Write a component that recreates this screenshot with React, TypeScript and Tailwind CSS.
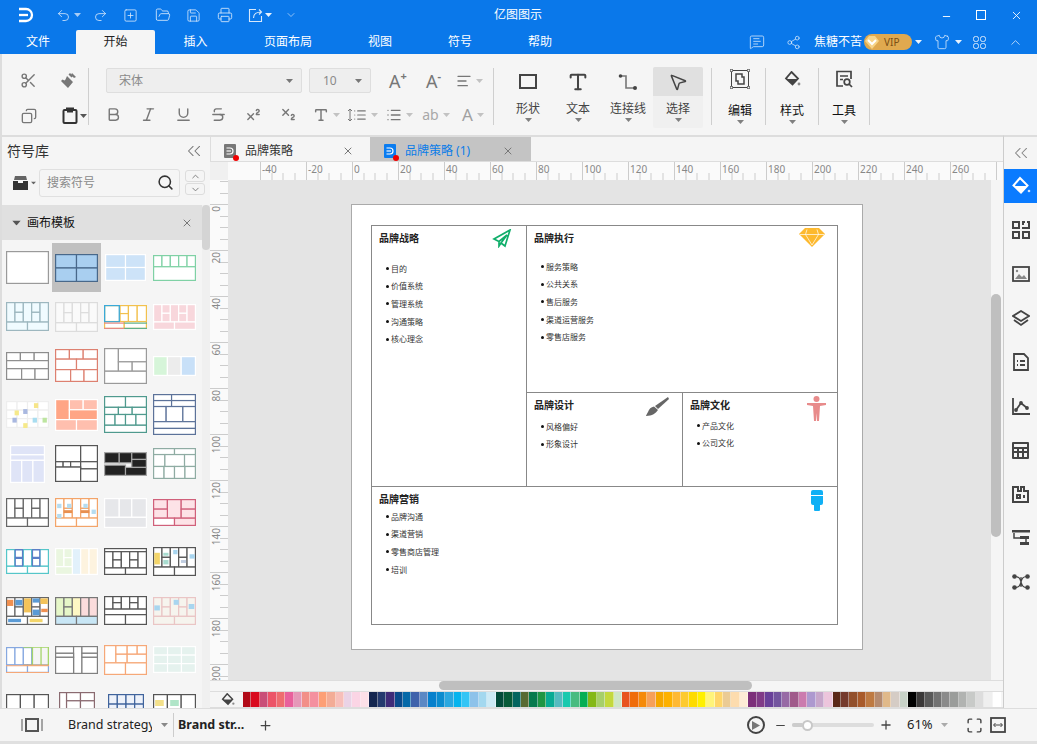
import React from "react";
import {
  Scissors, Undo2, Redo2, SquarePlus, FolderOpen, Save, Printer, Share2, Shirt, ChevronUp, ChevronsLeft,
  Search, X, Minus, Plus, Bold, Italic, Underline, Strikethrough, Superscript, Subscript, List, AlignLeft,
  ChevronDown, MessageSquareText, Maximize, Copy, Type, MousePointer2,
} from "lucide-react";

type Cell = [number, number, number, number, string?];
type Thumb = { h: number; w?: number; stroke: string; fill: string; cells: Cell[]; notes?: Cell[]; sw?: number };

const bmc: Cell[] = [[0, 0, 0.2, 0.7], [0.2, 0, 0.2, 0.35], [0.2, 0.35, 0.2, 0.35], [0.4, 0, 0.2, 0.7], [0.6, 0, 0.2, 0.35], [0.6, 0.35, 0.2, 0.35], [0.8, 0, 0.2, 0.7], [0, 0.7, 0.5, 0.3], [0.5, 0.7, 0.5, 0.3]];
const quad: Cell[] = [[0, 0, 0.5, 0.5], [0.5, 0, 0.5, 0.5], [0, 0.5, 0.5, 0.5], [0.5, 0.5, 0.5, 0.5]];
const brick: Cell[] = [[0, 0, 0.33, 0.3], [0.33, 0, 0.33, 0.3], [0.66, 0, 0.34, 0.3], [0, 0.3, 0.5, 0.33], [0.5, 0.3, 0.5, 0.33], [0, 0.63, 0.36, 0.37], [0.36, 0.63, 0.32, 0.37], [0.68, 0.63, 0.32, 0.37]];
const rows3: Cell[] = [[0, 0, 0.33, 0.3], [0.33, 0, 0.33, 0.3], [0.66, 0, 0.34, 0.3], [0, 0.3, 1, 0.3], [0, 0.6, 0.36, 0.4], [0.36, 0.6, 0.32, 0.4], [0.68, 0.6, 0.32, 0.4]];
const tiles: Cell[] = [[0, 0, 0.25, 0.33], [0.25, 0, 0.25, 0.33], [0.5, 0, 0.25, 0.33], [0.75, 0, 0.25, 0.33], [0, 0.33, 0.25, 0.33], [0.25, 0.33, 0.25, 0.33], [0.5, 0.33, 0.25, 0.33], [0.75, 0.33, 0.25, 0.33], [0, 0.66, 0.25, 0.34], [0.25, 0.66, 0.25, 0.34], [0.5, 0.66, 0.25, 0.34], [0.75, 0.66, 0.25, 0.34]];
const stack: Cell[] = [[0, 0, 0.33, 0.65], [0.33, 0, 0.67, 0.38], [0.33, 0.38, 0.33, 0.27], [0.66, 0.38, 0.34, 0.27], [0, 0.65, 1, 0.35]];

const thumbs: Thumb[] = [
  { h: 33, stroke: "#9a9a9a", fill: "#ffffff", cells: [[0, 0, 1, 1]] },
  { h: 28, stroke: "#48688a", fill: "#a9cff0", cells: quad },
  { h: 27, w: 41, stroke: "#ffffff", fill: "#cde3f8", cells: quad },
  { h: 26, stroke: "#7fd1a5", fill: "#ffffff", cells: [[0, 0, 0.2, 0.45], [0.2, 0, 0.2, 0.45], [0.4, 0, 0.2, 0.45], [0.6, 0, 0.2, 0.45], [0.8, 0, 0.2, 0.45], [0, 0.45, 1, 0.55]] },

  { h: 29, stroke: "#9db7bf", fill: "#f0fbff", cells: bmc },
  { h: 30, stroke: "#dcdcdc", fill: "#fafafa", cells: bmc },
  { h: 24, stroke: "#f2c14e", fill: "#ffffff", cells: [[0, 0, 0.37, 0.7, "#fff"], [0.37, 0, 0.2, 0.35], [0.37, 0.35, 0.2, 0.35], [0.57, 0, 0.21, 0.7], [0.78, 0, 0.22, 0.7], [0, 0.7, 0.47, 0.3], [0.47, 0.7, 0.53, 0.3]], notes: [[0, 0, 0.37, 0.05, "#3aa9d8"], [0, 0, 0.03, 0.7, "#3aa9d8"], [0.34, 0, 0.03, 0.7, "#3aa9d8"], [0, 0.67, 0.37, 0.05, "#3aa9d8"], [0, 0.73, 0.47, 0.05, "#e58a84"], [0, 0.95, 0.47, 0.05, "#e58a84"], [0.47, 0.73, 0.53, 0.05, "#5fb08a"], [0.47, 0.95, 0.53, 0.05, "#5fb08a"]] },
  { h: 26, stroke: "#ffffff", fill: "#f8d7dc", cells: bmc },

  { h: 28, stroke: "#8d8d8d", fill: "#ffffff", cells: rows3 },
  { h: 33, stroke: "#dd8070", fill: "#ffffff", cells: brick },
  { h: 36, stroke: "#9a9a9a", fill: "#ffffff", cells: stack },
  { h: 20, stroke: "#ffffff", fill: "#d6f5d9", cells: [[0, 0, 0.33, 1], [0.33, 0, 0.33, 1, "#ececec"], [0.66, 0, 0.34, 1, "#c8e0f8"]] },

  { h: 27, stroke: "#eeeeee", fill: "#ffffff", cells: tiles, notes: [[0.2, 0.35, 0.1, 0.18, "#f6e98a"], [0.4, 0.3, 0.1, 0.18, "#a9b8e0"], [0.65, 0.08, 0.1, 0.18, "#f6e58a"], [0.15, 0.62, 0.1, 0.18, "#a9b8e0"], [0.62, 0.62, 0.1, 0.18, "#a8ddf0"], [0.85, 0.62, 0.1, 0.18, "#bde5a0"], [0.4, 0.82, 0.1, 0.18, "#f6e98a"]] },
  { h: 32, stroke: "#ffffff", fill: "#ffbfae", cells: [[0, 0, 0.33, 0.65, "#ffa585"], [0.33, 0, 0.33, 0.33], [0.66, 0, 0.34, 0.33], [0.33, 0.33, 0.67, 0.32, "#ffa585"], [0, 0.65, 0.5, 0.35], [0.5, 0.65, 0.5, 0.35]] },
  { h: 37, stroke: "#4f9a8e", fill: "#ffffff", cells: [[0, 0, 0.5, 0.3], [0.5, 0, 0.5, 0.3], [0, 0.3, 0.33, 0.2], [0.33, 0.3, 0.33, 0.2], [0.66, 0.3, 0.34, 0.2], [0, 0.5, 0.25, 0.3], [0.25, 0.5, 0.25, 0.3], [0.5, 0.5, 0.25, 0.3], [0.75, 0.5, 0.25, 0.3], [0, 0.8, 1, 0.2]] },
  { h: 41, stroke: "#5c7299", fill: "#ffffff", cells: [[0, 0, 0.43, 0.15], [0.43, 0, 0.57, 0.15], [0, 0.15, 0.43, 0.15], [0.43, 0.15, 0.57, 0.15], [0, 0.3, 0.3, 0.38], [0.3, 0.3, 0.4, 0.38], [0.7, 0.3, 0.3, 0.38], [0, 0.68, 1, 0.17], [0, 0.85, 1, 0.15]] },

  { h: 38, w: 35, stroke: "#ffffff", fill: "#dfe4f7", cells: [[0, 0, 1, 0.25], [0, 0.25, 1, 0.15], [0, 0.4, 0.33, 0.6], [0.33, 0.4, 0.33, 0.6], [0.66, 0.4, 0.34, 0.6]] },
  { h: 37, stroke: "#555555", fill: "#ffffff", cells: [[0, 0, 0.6, 0.45], [0.6, 0, 0.4, 0.45], [0, 0.45, 0.18, 0.15], [0.18, 0.45, 0.18, 0.15], [0.36, 0.45, 0.24, 0.15], [0.6, 0.45, 0.4, 0.2], [0, 0.6, 0.6, 0.4], [0.6, 0.65, 0.4, 0.35]] },
  { h: 24, stroke: "#a5a5a5", fill: "#222222", cells: [[0, 0, 0.35, 0.45], [0.35, 0, 0.3, 0.45], [0.65, 0, 0.35, 0.3], [0.65, 0.3, 0.35, 0.35], [0, 0.55, 0.5, 0.45], [0.5, 0.65, 0.5, 0.35]] },
  { h: 31, stroke: "#8faca3", fill: "#ffffff", cells: [[0, 0, 0.5, 0.2], [0.5, 0, 0.5, 0.2], [0, 0.2, 0.27, 0.4], [0.27, 0.2, 0.47, 0.4], [0.74, 0.2, 0.26, 0.4], [0, 0.6, 0.25, 0.4], [0.25, 0.6, 0.25, 0.4], [0.5, 0.6, 0.25, 0.4], [0.75, 0.6, 0.25, 0.4]] },

  { h: 29, stroke: "#666666", fill: "#ffffff", cells: bmc },
  { h: 29, stroke: "#f3a469", fill: "#ffffff", cells: bmc, notes: [[0.05, 0.2, 0.1, 0.15, "#b5dcf0"], [0.28, 0.2, 0.1, 0.15, "#b5dcf0"], [0.05, 0.55, 0.1, 0.15, "#b5dcf0"], [0.66, 0.2, 0.1, 0.15, "#b5dcf0"], [0.85, 0.4, 0.1, 0.15, "#b5dcf0"], [0.2, 0.42, 0.2, 0.1, "#e89050"], [0.6, 0.42, 0.2, 0.1, "#e89050"]] },
  { h: 30, stroke: "#ffffff", fill: "#e6e7ea", cells: [[0, 0, 0.35, 0.65], [0.35, 0, 0.3, 0.65], [0.65, 0, 0.35, 0.65], [0, 0.65, 1, 0.35]] },
  { h: 27, stroke: "#d0607a", fill: "#fde3e7", cells: [[0, 0, 0.33, 0.37], [0.33, 0, 0.33, 0.72], [0.66, 0, 0.34, 0.37], [0, 0.37, 0.33, 0.35], [0.66, 0.37, 0.34, 0.35], [0, 0.72, 0.5, 0.28, "#fff"], [0.5, 0.72, 0.5, 0.28]] },

  { h: 25, stroke: "#55c6c9", fill: "#ffffff", cells: bmc, notes: [[0.2, 0, 0.2, 0.7, "#5b7fc7"], [0.6, 0, 0.2, 0.7, "#5b7fc7"], [0.23, 0.06, 0.14, 0.25, "#fff"], [0.23, 0.4, 0.14, 0.25, "#fff"], [0.63, 0.06, 0.14, 0.25, "#fff"], [0.63, 0.4, 0.14, 0.25, "#fff"]] },
  { h: 27, stroke: "#ffffff", fill: "#eaf6e0", cells: [[0, 0, 0.2, 0.7], [0.2, 0, 0.2, 0.35], [0.2, 0.35, 0.2, 0.35], [0.4, 0, 0.2, 1, "#e2f1fb"], [0.6, 0, 0.2, 1, "#fdf3df"], [0.8, 0, 0.2, 1, "#fdf3df"], [0, 0.7, 0.4, 0.3]] },
  { h: 27, stroke: "#555555", fill: "#ffffff", cells: [[0, 0, 1, 0.12], [0, 0.12, 0.2, 0.63], [0.2, 0.12, 0.2, 0.32], [0.2, 0.44, 0.2, 0.31], [0.4, 0.12, 0.2, 0.63], [0.6, 0.12, 0.2, 0.32], [0.6, 0.44, 0.2, 0.31], [0.8, 0.12, 0.2, 0.63], [0, 0.75, 0.5, 0.25], [0.5, 0.75, 0.5, 0.25]] },
  { h: 29, stroke: "#555555", fill: "#ffffff", cells: bmc, notes: [[0.03, 0.2, 0.13, 0.4, "#f3d56a"], [0.47, 0.1, 0.1, 0.15, "#a8d5ef"], [0.85, 0.25, 0.12, 0.15, "#a8d5ef"], [0.24, 0.2, 0.12, 0.1, "#a8dcd0"], [0.24, 0.45, 0.12, 0.15, "#a8dcd0"], [0.65, 0.45, 0.12, 0.1, "#c0cde0"]] },

  { h: 28, stroke: "#666666", fill: "#ffffff", cells: bmc, notes: [[0.02, 0.1, 0.15, 0.22, "#f09050"], [0.42, 0.05, 0.16, 0.5, "#f3c35a"], [0.22, 0.1, 0.16, 0.2, "#5b9bd5"], [0.62, 0.05, 0.16, 0.15, "#5b9bd5"], [0.62, 0.45, 0.16, 0.2, "#5b9bd5"], [0.8, 0.05, 0.17, 0.2, "#f3c35a"], [0.82, 0.42, 0.15, 0.12, "#f09050"], [0.05, 0.78, 0.3, 0.12, "#5b9bd5"], [0.55, 0.78, 0.3, 0.12, "#f3d56a"]] },
  { h: 28, stroke: "#777777", fill: "#e6f7c8", cells: [[0, 0, 0.2, 0.7], [0.2, 0, 0.2, 0.35], [0.2, 0.35, 0.2, 0.35], [0.4, 0, 0.2, 0.7, "#fdf7c4"], [0.6, 0, 0.2, 0.7, "#fbdcdc"], [0.8, 0, 0.2, 0.7, "#fbdcdc"], [0, 0.7, 0.5, 0.3, "#c8e6f5"], [0.5, 0.7, 0.5, 0.3, "#c8e6f5"]] },
  { h: 29, stroke: "#555555", fill: "#ffffff", cells: [[0, 0, 0.2, 0.45], [0.2, 0, 0.2, 0.22], [0.2, 0.22, 0.2, 0.23], [0.4, 0, 0.2, 0.45], [0.6, 0, 0.2, 0.22], [0.6, 0.22, 0.2, 0.23], [0.8, 0, 0.2, 0.45], [0, 0.45, 1, 0.2], [0, 0.65, 0.5, 0.35], [0.5, 0.65, 0.5, 0.35]] },
  { h: 28, stroke: "#eac5c5", fill: "#f6f4ee", cells: bmc, notes: [[0.03, 0.3, 0.13, 0.18, "#a8d5ef"], [0.48, 0.1, 0.12, 0.18, "#a8d5ef"], [0.83, 0.25, 0.13, 0.18, "#a8d5ef"]] },

  { h: 26, stroke: "#86a8e0", fill: "#ffffff", cells: [[0, 0, 0.2, 0.7], [0.2, 0, 0.2, 0.7], [0.4, 0, 0.2, 0.7], [0, 0.7, 0.5, 0.3], [0.5, 0.7, 0.5, 0.3]], notes: [[0.4, 0, 0.6, 0.03, "#a5d56a"], [0.6, 0, 0.03, 0.7, "#a5d56a"], [0.8, 0, 0.03, 0.7, "#a5d56a"], [0.97, 0, 0.03, 0.7, "#a5d56a"], [0.4, 0.68, 0.6, 0.04, "#e5a040"], [0, 0.7, 1, 0.04, "#f5a878"], [0, 0.96, 1, 0.04, "#f5a878"]] },
  { h: 28, stroke: "#808080", fill: "#ffffff", cells: [[0, 0, 0.43, 0.25], [0.43, 0, 0.2, 1], [0.63, 0, 0.37, 0.25], [0, 0.25, 0.43, 0.15], [0.63, 0.25, 0.37, 0.15], [0, 0.4, 0.43, 0.6], [0.63, 0.4, 0.37, 0.6]] },
  { h: 30, stroke: "#f6a878", fill: "#ffffff", cells: [[0, 0, 0.27, 0.6], [0.27, 0, 0.27, 0.3], [0.27, 0.3, 0.27, 0.3], [0.54, 0, 0.24, 0.3], [0.78, 0, 0.22, 0.3], [0.54, 0.3, 0.46, 0.3], [0, 0.6, 0.5, 0.4], [0.5, 0.6, 0.5, 0.4]] },
  { h: 27, stroke: "#ffffff", fill: "#e5f2ee", cells: tiles.filter((_, i) => i % 4 !== 3).map(([x, y, w, h]) => [x / 0.75, y, w / 0.75, h] as Cell) },

  { h: 30, stroke: "#555555", fill: "#ffffff", cells: [[0, 0, 0.33, 1], [0.33, 0, 0.33, 1], [0.66, 0, 0.34, 1]] },
  { h: 34, w: 36, stroke: "#8a6a70", fill: "#ffffff", cells: [[0, 0, 0.2, 0.5], [0.2, 0, 0.4, 0.25], [0.6, 0, 0.4, 0.25], [0.2, 0.25, 0.4, 0.25], [0.6, 0.25, 0.4, 0.25], [0, 0.5, 1, 0.5]] },
  { h: 30, w: 36, stroke: "#3f639c", fill: "#eef2fa", cells: tiles },
  { h: 30, stroke: "#555555", fill: "#ffffff", cells: [[0, 0, 0.33, 1], [0.33, 0, 0.33, 1], [0.66, 0, 0.34, 1]], notes: [[0.05, 0.2, 0.2, 0.2, "#f3e08a"], [0.4, 0.2, 0.2, 0.2, "#b0e5c8"]] },
];

const palette = [
  "#b10a18", "#d90a1e", "#c94f78", "#ec5468", "#ee6c6f", "#e8609c", "#e598b8", "#f28f88", "#f4909f", "#fd9f75", "#f3ac96", "#f7bfba", "#ead3e6", "#fbd5e5", "#fce0e8",
  "#14264f", "#243a6e", "#3f2b78", "#0b4a8b", "#0569a8", "#3f62ab", "#5b88c4", "#0680cc", "#0a8ccf", "#2aa8e0", "#05b4ee", "#33c5f5", "#8dc2ea", "#a3d8ef", "#cdeaf5",
  "#034b3a", "#075a38", "#04655f", "#586a32", "#077a4e", "#1f9644", "#09ab94", "#55bbc0", "#18c9ae", "#48bb80", "#05ae54", "#84b816", "#a6cf6a", "#c3d83e", "#cfe6c5",
  "#e85420", "#ef6c0a", "#f58a08", "#f6a05a", "#f5a700", "#fdb100", "#feb934", "#fdca2f", "#fedb00", "#fff000", "#fff47b", "#ffd66a", "#ebcb94", "#fddcae", "#fdebd6",
  "#7c2f7a", "#803b87", "#694199", "#73559e", "#976aa5", "#a05a8a", "#cb7bae", "#ad99cf", "#c7a7cb", "#ecc5dc",
  "#5a2818", "#743a2c", "#92502c", "#a85a2a", "#be7a42", "#b58b70", "#e0b98a", "#d5ccc5", "#c8d2c8",
  "#000000", "#3a3838", "#595959", "#727272", "#8a8a8a", "#9a9c9a", "#b1b3b1", "#c8cac8", "#dddddd", "#efefef", "#ffffff",
];

function Caret({ color = "#888888", className = "" }: { color?: string; className?: string }) {
  return (
    <svg width="7" height="4" viewBox="0 0 7 4" className={`shrink-0 ${className}`}>
      <path d="M0 0h7L3.5 4z" fill={color} />
    </svg>
  );
}

function ThumbBox({ t }: { t: Thumb }) {
  const w = t.w ?? 43;
  return (
    <svg width={w} height={t.h} viewBox={`0 0 ${w} ${t.h}`}>
      {t.cells.map(([x, y, cw, ch, f], i) => (
        <rect key={i} x={0.6 + x * (w - 1.2)} y={0.6 + y * (t.h - 1.2)} width={cw * (w - 1.2)} height={ch * (t.h - 1.2)} fill={f ?? t.fill} stroke={t.stroke} strokeWidth="1.2" />
      ))}
      {t.notes?.map(([x, y, cw, ch, f], i) => (
        <rect key={i} x={x * w} y={y * t.h} width={cw * w} height={ch * t.h} fill={f} />
      ))}
    </svg>
  );
}

function Logo({ size = 16, color = "white" }: { size?: number; color?: string }) {
  return (
    <svg width={size} height={size} viewBox="0 0 16 16" fill="none" stroke={color} strokeWidth="2.3">
      <path d="M1 2h7a6 6 0 0 1 0 12H1" />
      <path d="M1 8h9" />
    </svg>
  );
}

function DocIcon({ color }: { color: string }) {
  return (
    <div className="relative h-[14px] w-[12px] shrink-0 rounded-[1px]" style={{ backgroundColor: color }}>
      <div className="absolute left-[2px] top-[3px]">
        <Logo size={8} />
      </div>
      <div className="absolute bottom-[-3px] right-[-3px] h-[6px] w-[6px] rounded-full bg-[#f00000]" />
    </div>
  );
}

function TitleBar() {
  const ic = "#d7e8fb";
  return (
    <div className="flex h-[30px] shrink-0 items-center bg-[#0a78ea] text-white">
      <div className="ml-[18px] w-[38px]"><Logo /></div>
      <div className="flex w-[37px] items-center gap-[3px]"><Undo2 size={15} color={ic} strokeWidth={1.3} /><Caret color="#a9cdf6" /></div>
      <div className="flex w-[30px] items-center"><Redo2 size={15} color={ic} strokeWidth={1.3} /></div>
      <div className="flex w-[32px] items-center"><SquarePlus size={15} color={ic} strokeWidth={1.3} /></div>
      <div className="flex w-[31px] items-center"><FolderOpen size={16} color={ic} strokeWidth={1.3} /></div>
      <div className="flex w-[31px] items-center"><Save size={15} color={ic} strokeWidth={1.3} /></div>
      <div className="flex w-[31px] items-center"><Printer size={16} color={ic} strokeWidth={1.3} /></div>
      <div className="flex w-[37px] items-center gap-[2px]">
        <svg width="15" height="15" viewBox="0 0 15 15" fill="none" stroke={ic} strokeWidth="1.1">
          <path d="M8 1.500H1.500v12h12V8" /><path d="M5.500 10c0-4 3-6 8-6M11 1.500L13.500 4 11 6.500" />
        </svg>
        <Caret color="#e8f2fd" />
      </div>
      <ChevronDown size={12} color={ic} strokeWidth={1.3} />
      <div className="ml-[197px] w-[447px] text-[12px] leading-[30px]">亿图图示</div>
      <Minus size={11} strokeWidth={2} className="mr-[24px] mt-[3px]" />
      <div className="mr-[24px] h-[10px] w-[10px] border border-white" />
      <X size={13} strokeWidth={1.6} />
    </div>
  );
}

function TabBar() {
  const tabs: [string, number][] = [["文件", 76], ["开始", 79], ["插入", 81], ["页面布局", 104], ["视图", 80], ["符号", 80], ["帮助", 80]];
  return (
    <div className="flex h-[24px] shrink-0 items-stretch bg-[#0a78ea] text-[12px] text-white">
      {tabs.map(([t, w]) => (
        <div key={t} style={{ width: w }} className={`flex items-center justify-center ${t === "开始" ? "rounded-t-[2px] bg-[#f5f5f5] text-[#222222]" : ""}`}>
          {t}
        </div>
      ))}
      <div className="ml-[169px] flex items-center">
        <MessageSquareText size={16} color="#d7e8fb" strokeWidth={1.2} />
        <Share2 size={15} color="#d7e8fb" strokeWidth={1.2} className="ml-[21px]" />
        <span className="ml-[13px] w-[48px] whitespace-nowrap">焦糖不苦</span>
        <div className="ml-[2px] flex h-[16px] w-[48px] items-center rounded-full bg-[#e0a94f]">
          <svg width="16" height="16" viewBox="0 0 16 16"><path d="M1 7l4-5h6l4 5-7 8z" fill="#f7d488" /><path d="M4 6l4 4 4-4" stroke="#fff" strokeWidth="2" fill="none" /></svg>
          <span className="ml-[4px] text-[10px] leading-none text-[#7a4e14]">VIP</span>
        </div>
        <Caret color="#e8f2fd" className="ml-[3px]" />
        <Shirt size={16} color="#d7e8fb" strokeWidth={1.2} className="ml-[12px]" />
        <Caret color="#e8f2fd" className="ml-[5px]" />
        <svg width="13" height="13" viewBox="0 0 13 13" fill="none" stroke="#d7e8fb" className="ml-[11px]">
          <rect x=".5" y=".5" width="5" height="5" rx="2" /><rect x="7.5" y=".5" width="5" height="5" rx="2" />
          <rect x=".5" y="7.5" width="5" height="5" rx="2" /><rect x="7.5" y="7.5" width="5" height="5" rx="2" />
        </svg>
        <ChevronUp size={15} color="#d7e8fb" strokeWidth={1.3} className="ml-[22px]" />
      </div>
    </div>
  );
}

function Sep() {
  return <div className="mt-[14px] h-[57px] w-px shrink-0 bg-[#cfcfcf]" />;
}

function TextColorCell({ w, children }: { w: number; children: React.ReactNode }) {
  return (
    <div style={{ width: w }} className="flex items-center justify-center gap-[4px]">
      {children}
      <Caret color="#c2c2c2" />
    </div>
  );
}

function BigTool({ label, icon, strong, active }: { label: string; icon: React.ReactNode; strong?: boolean; active?: boolean }) {
  return (
    <div className={`mt-[13px] flex h-[61px] w-[50px] flex-col items-center rounded-[2px] ${active ? "bg-[#f0f0f0]" : ""}`}>
      <div className={`flex w-full shrink-0 items-center justify-center rounded-t-[2px] ${strong ? "h-[24px]" : "h-[29px]"} ${active ? "bg-[#e0e0e0]" : ""}`}>{icon}</div>
      <div className={`shrink-0 text-[12px] leading-[20px] ${strong ? "mt-[10px] text-[#111111]" : "mt-[3px] text-[#444444]"}`}>{label}</div>
      <Caret color="#808080" className="-mt-[1px]" />
    </div>
  );
}

function Ribbon() {
  const g = "#777777";
  return (
    <div className="flex h-[81px] shrink-0 border-l-2 border-[#dddddd] bg-[#f5f5f5]">
      <div className="w-[86px] pl-[7px] pt-[9px]">
        <div className="flex h-[35px] items-center">
          <div className="flex w-[40px] justify-center"><Scissors size={17} color={g} strokeWidth={2} /></div>
          <div className="flex w-[40px] justify-center">
            <svg width="18" height="18" viewBox="0 0 18 18" fill={g}><path d="M11 1l3 3-1.5 1.5-3-3zM8 4l6 6-5 6-7-7 1.5-1.5 2 1 1-1z" /><path d="M13 1l4 4-2 1-3-3z" /></svg>
          </div>
        </div>
        <div className="flex h-[35px] items-center">
          <div className="flex w-[40px] justify-center"><Copy size={16} color={g} strokeWidth={2} className="-scale-x-100" /></div>
          <div className="flex w-[40px] items-center justify-end gap-[2px] pr-[1px]">
            <svg width="16" height="17" viewBox="0 0 16 17" fill="none" stroke="#333333" strokeWidth="2"><rect x="1.5" y="3" width="13" height="13" rx="1" /><path d="M5 3V1.5h6V3" /><path d="M5 4.5h6" /></svg>
            <Caret color="#555555" />
          </div>
        </div>
      </div>
      <Sep />
      <div className="w-[404px]">
        <div className="mt-[14px] flex h-[25px] items-center pl-[17px]">
          <div className="flex h-[25px] w-[196px] items-center justify-between rounded-[2px] border border-[#dedede] bg-[#eeeeee] pl-[12px] pr-[3px] text-[12px] text-[#8a8a8a]">
            宋体<Caret color="#777777" className="mr-[5px]" />
          </div>
          <div className="ml-[7px] flex h-[25px] w-[62px] items-center justify-between rounded-[2px] border border-[#dedede] bg-[#eeeeee] pl-[13px] pr-[8px] text-[12px] text-[#8a8a8a]">
            10<Caret color="#777777" />
          </div>
          <div className="ml-[18px] flex w-[37px] items-start text-[18px] leading-[20px] text-[#777777]">A<span className="text-[11px] font-bold leading-[10px]">+</span></div>
          <div className="flex w-[30px] items-start text-[18px] leading-[20px] text-[#777777]">A<span className="text-[11px] font-bold leading-[10px]">-</span></div>
          <AlignLeft size={16} color={g} strokeWidth={2} />
          <Caret color="#c2c2c2" className="ml-[4px]" />
        </div>
        <div className="mt-[9px] flex h-[25px] items-center pl-[7px]">
          {[Bold, Italic, Underline, Strikethrough, Superscript, Subscript].map((Ic, i) => (
            <div key={i} className="flex w-[35px] justify-center"><Ic size={17} color={g} strokeWidth={2} /></div>
          ))}
          <TextColorCell w={40}><Type size={16} color={g} strokeWidth={2.2} /></TextColorCell>
          <TextColorCell w={33}>
            <div className="flex items-center">
              <svg width="6" height="14" viewBox="0 0 6 14" fill="none" stroke={g}><path d="M3 1v12M1 3l2-2 2 2M1 11l2 2 2-2" /></svg>
              <List size={14} color={g} strokeWidth={2} />
            </div>
          </TextColorCell>
          <TextColorCell w={40}><List size={16} color={g} strokeWidth={2} /></TextColorCell>
          <TextColorCell w={34}><span className="text-[14px] leading-none text-[#a8a8a8]">ab</span></TextColorCell>
          <TextColorCell w={40}><span className="text-[17px] leading-none text-[#a0a0a0]">A</span></TextColorCell>
        </div>
      </div>
      <Sep />
      <div className="flex pl-[9px]">
        <BigTool label="形状" icon={<div className="h-[15px] w-[18px] border-2 border-[#444444]" />} />
        <BigTool label="文本" icon={<Type size={22} color="#444444" strokeWidth={2.2} />} />
        <BigTool label="连接线" icon={
          <svg width="20" height="18" viewBox="0 0 20 18" fill="none" stroke="#777777" strokeWidth="1.6"><path d="M3 3h5v12h8" /><circle cx="2.5" cy="3" r="1.8" fill="#444444" stroke="none" /><circle cx="17" cy="15" r="2" fill="#444444" stroke="none" /></svg>
        } />
        <BigTool active label="选择" icon={<MousePointer2 size={20} color="#444444" strokeWidth={1.8} />} />
      </div>
      <div className="ml-[8px]"><Sep /></div>
      <div className="ml-[3px] flex">
        <BigTool strong label="编辑" icon={
          <svg width="20" height="20" viewBox="0 0 20 20" fill="none" stroke="#444444"><rect x="1.5" y="1.5" width="17" height="17" /><path d="M6 5h6v3h2v7H8v-3H6z" strokeWidth="1.5" /><circle cx="1.5" cy="1.5" r="1.3" fill="#f5f5f5" /><circle cx="18.5" cy="1.5" r="1.3" fill="#f5f5f5" /><circle cx="1.5" cy="18.5" r="1.3" fill="#f5f5f5" /><circle cx="18.5" cy="18.5" r="1.3" fill="#f5f5f5" /></svg>
        } />
      </div>
      <Sep />
      <div className="flex w-[52px] justify-center">
        <BigTool strong label="样式" icon={<Bucket size={17} color="#444444" />} />
      </div>
      <Sep />
      <div className="flex w-[50px] justify-center">
        <BigTool strong label="工具" icon={
          <svg width="18" height="18" viewBox="0 0 18 18" fill="none" stroke="#444444" strokeWidth="1.7"><path d="M8 16H2V1.5h14V9" /><path d="M5 6h8M5 9.5h3" /><circle cx="12" cy="12" r="2.8" /><path d="M14 14l3 3" /></svg>
        } />
      </div>
      <Sep />
    </div>
  );
}

function Bucket({ size, color }: { size: number; color: string }) {
  return (
    <svg width={size} height={size} viewBox="0 0 17 17">
      <path d="M7.5 1l6.5 6.5-5.5 6-6.5-6z" fill="none" stroke={color} strokeWidth="1.8" />
      <path d="M2.5 8h11l-5 5.4z" fill={color} />
      <circle cx="15" cy="13" r="1.4" fill={color} opacity=".6" />
    </svg>
  );
}

function LeftPanel() {
  return (
    <div className="flex w-[210px] shrink-0 flex-col border-l-2 border-t-2 border-[#dddddd] bg-[#f5f5f5]">
      <div className="flex h-[29px] shrink-0 items-start justify-between pl-[5px] pr-[5px] pt-[4px] text-[14px] leading-[20px] text-[#333333]">
        符号库
        <ChevronsLeft size={22} color="#777777" strokeWidth={1.1} className="-mt-[1px]" />
      </div>
      <div className="flex h-[39px] shrink-0 items-center pb-[6px] pl-[11px]">
        <svg width="15" height="16" viewBox="0 0 15 16" fill="#333333"><path d="M2 1h11l1 4H1z" opacity=".75" /><path d="M0 6h5v2h5V6h5v9H0z" /></svg>
        <Caret color="#666666" className="ml-[2px] scale-75" />
        <div className="ml-[2px] flex h-[28px] w-[141px] items-center justify-between rounded-[3px] border border-[#e0e0e0] pl-[7px] pr-[5px] text-[12px] text-[#8a8a8a]">
          搜索符号<Search size={17} color="#333333" strokeWidth={2.2} />
        </div>
        <div className="ml-[5px] flex flex-col gap-[1px]">
          <div className="flex h-[12px] w-[20px] items-center justify-center rounded-[3px] border border-[#dddddd]"><ChevronUp size={11} color="#777777" /></div>
          <div className="flex h-[12px] w-[20px] items-center justify-center rounded-[3px] border border-[#dddddd]"><ChevronDown size={11} color="#777777" /></div>
        </div>
      </div>
      <div className="flex min-h-0 flex-1">
        <div className="flex min-w-0 flex-1 flex-col">
          <div className="flex h-[35px] shrink-0 items-center justify-between bg-[#e0e0e0] pl-[11px] pr-[9px] text-[12px] text-[#111111]">
            <div className="flex items-center gap-[7px]"><Caret color="#555555" className="scale-125" />画布模板</div>
            <X size={12} color="#777777" />
          </div>
          <div className="grid grid-cols-[repeat(4,49px)] auto-rows-[49px] overflow-hidden pl-px pt-[3px]">
            {thumbs.map((t, i) => (
              <div key={i} className={`flex items-center justify-center ${i === 1 ? "bg-[#c0c0c0]" : ""}`}>
                <ThumbBox t={t} />
              </div>
            ))}
          </div>
        </div>
        <div className="w-[8px] shrink-0 bg-[#f0f0f0]">
          <div className="h-[45px] rounded-[4px] bg-[#d4d4d4]" />
        </div>
      </div>
    </div>
  );
}

function TopRuler() {
  const ticks = [];
  for (let k = -2; k <= 14; k++) {
    const x = 124 + 46 * k;
    ticks.push(<path key={k} d={`M${x + 0.5} 0v18M${x + 12} 11v7M${x + 23} 11v7M${x + 35} 11v7`} stroke="#cccccc" fill="none" />);
    if (k <= 13) ticks.push(<text key={`t${k}`} x={x + 2} y={11} fontSize="10" fill="#888888">{k * 20}</text>);
  }
  return <svg width="775" height="18" className="block bg-[#fafafa]">{ticks}</svg>;
}

function LeftRuler() {
  const ticks = [];
  for (let k = -1; k <= 10; k++) {
    const y = 24 + 46 * k;
    ticks.push(<path key={k} d={`M0 ${y + 0.5}h18M10 ${y + 12.5}h8M10 ${y + 23.5}h8M10 ${y + 35.5}h8`} stroke="#cccccc" fill="none" />);
    if (k >= 0) ticks.push(<text key={`t${k}`} x={10} y={y + 2} fontSize="10" fill="#888888" textAnchor="end" transform={`rotate(-90 10 ${y + 2})`}>{k * 20}</text>);
  }
  return <svg width="18" height="500" className="block shrink-0 bg-[#fafafa]">{ticks}</svg>;
}

function Items({ list, y = 0, gap = 17.6 }: { list: string[]; y?: number; gap?: number }) {
  return (
    <ul style={{ marginTop: y }} className="pl-[14px]">
      {list.map((t) => (
        <li key={t} style={{ height: gap }} className="flex items-center text-[8px] text-[#333333]">
          <span className="mr-[2px] h-[3px] w-[3px] rounded-full bg-[#111111]" />{t}
        </li>
      ))}
    </ul>
  );
}

function Head({ children, icon }: { children: string; icon?: React.ReactNode }) {
  return (
    <div className="relative pl-[7px] pt-[6px] text-[10px] font-bold leading-[12px] text-[#222222]">
      {children}
      <div className="absolute right-0 top-0">{icon}</div>
    </div>
  );
}

function Page() {
  return (
    <div className="ml-[123px] mt-[24px] h-[446px] w-[512px] border border-[#aaaaaa] bg-white pl-[19px] pt-[20px]">
      <div className="grid h-[400px] w-[467px] grid-cols-[155px_156px_155px] grid-rows-[167px_94px_138px] border-l border-t border-[#888888]">
        <div className="row-span-2 border-b border-r border-[#888888]">
          <Head icon={
            <svg width="20" height="19" viewBox="0 0 20 19" className="mr-[14px] mt-[3px]" fill="none" stroke="#10ae6a" strokeWidth="1.7"><path d="M18 1L2 10l5 2.5L15 6l-6 8 4 3zM7 12.5V17l2-3" /></svg>
          }>品牌战略</Head>
          <Items y={16} list={["目的", "价值系统", "管理系统", "沟通策略", "核心理念"]} />
        </div>
        <div className="col-span-2 border-b border-r border-[#888888]">
          <Head icon={
            <svg width="26" height="19" viewBox="0 0 26 19" className="mr-[12px] mt-[2px]" fill="#fdb92e"><path d="M6 0h14l6 6-13 13L0 6z" /><path d="M1 6.500h24M8 1.500L6.500 6.500 13 17l6.500-10.500L18 1.500" stroke="#fff" strokeWidth=".7" fill="none" /></svg>
          }>品牌执行</Head>
          <Items y={14} list={["服务策略", "公共关系", "售后服务", "渠道运营服务", "零售店服务"]} />
        </div>
        <div className="border-b border-r border-[#888888]">
          <Head icon={
            <svg width="24" height="20" viewBox="0 0 24 20" className="mr-[13px] mt-[4px]" fill="#666666"><path d="M23 0l1 2-11 10-3-3z" /><path d="M9 9.500l4 3.500c-2 3-6 6-12 6 0-1 1-2 2-4 1-3 3-5 6-5.500z" /></svg>
          }>品牌设计</Head>
          <Items y={7} list={["风格偏好", "形象设计"]} />
        </div>
        <div className="border-b border-r border-[#888888]">
          <Head icon={
            <svg width="19" height="25" viewBox="0 0 19 25" className="mr-[11px] mt-[3px]" fill="#e88b8b"><circle cx="9.500" cy="3" r="3" /><path d="M0 7h19v2l-6 1-1 15h-2l-.5-8-.5 8H7L6 10 0 9z" /></svg>
          }>品牌文化</Head>
          <Items y={6} list={["产品文化", "公司文化"]} />
        </div>
        <div className="col-span-3 border-b border-r border-[#888888]">
          <Head icon={
            <svg width="12" height="21" viewBox="0 0 12 21" className="mr-[14px] mt-[3px]" fill="#10b0f5"><path d="M2 0h8a2 2 0 0 1 2 2v3H0V2a2 2 0 0 1 2-2z" /><path d="M0 6h12v7a2 2 0 0 1-2 2H9v5a1 1 0 0 1-1 1H4a1 1 0 0 1-1-1v-5H2a2 2 0 0 1-2-2z" /></svg>
          }>品牌营销</Head>
          <Items y={3} list={["品牌沟通", "渠道营销", "零售商店管理", "培训"]} />
        </div>
      </div>
    </div>
  );
}

function Center() {
  return (
    <div className="flex min-w-0 flex-1 flex-col border-t-2 border-[#dddddd]">
      <div className="flex h-[25px] shrink-0 border-b border-l border-[#dddddd] bg-[#f5f5f5]">
        <div className="flex w-[159px] items-center pl-[13px] pt-[4px] text-[12px] text-[#333333]">
          <DocIcon color="#777777" />
          <span className="ml-[9px]">品牌策略</span>
          <X size={12} color="#777777" className="ml-[49px]" />
        </div>
        <div className="flex w-[161px] items-center bg-[#c4c4c4] pl-[14px] pt-[4px] text-[12px] text-[#0a7ce8]">
          <DocIcon color="#0a7cf0" />
          <span className="ml-[9px]">品牌策略 (1)</span>
          <X size={12} color="#777777" className="ml-[32px]" />
        </div>
      </div>
      <div className="flex h-[18px] shrink-0">
        <div className="w-[18px] shrink-0 bg-[#f0f0f0]" />
        <TopRuler />
      </div>
      <div className="flex h-[500px] shrink-0">
        <LeftRuler />
        <div className="min-w-0 flex-1 overflow-hidden bg-[#e4e4e4]">
          <div className="flow-root"><Page /></div>
        </div>
        <div className="w-[12px] shrink-0 bg-[#f5f5f5] pt-[114px]">
          <div className="h-[243px] w-[10px] rounded-full bg-[#bfbfbf]" />
        </div>
      </div>
      <div className="h-[11px] shrink-0 border-t border-[#dddddd] bg-[#f5f5f5] pl-[229px]">
        <div className="h-[9px] w-[313px] rounded-full bg-[#bfbfbf]" />
      </div>
      <div className="flex h-[17px] shrink-0 items-center border-y border-[#dddddd] bg-[#f5f5f5]">
        <div className="flex w-[33px] justify-center pl-[2px]"><Bucket size={14} color="#444444" /></div>
        <div className="flex h-full w-[758px]">
          {palette.map((c, i) => (
            <div key={i} style={{ backgroundColor: c }} className="h-full flex-1 border-r border-white/40" />
          ))}
        </div>
      </div>
    </div>
  );
}

function RightBar() {
  const c = "#444444";
  const icons: React.ReactNode[] = [
    <svg width="18" height="18" viewBox="0 0 18 18" fill="none" stroke={c} strokeWidth="2"><rect x="1" y="1" width="6" height="6" /><rect x="1" y="11" width="6" height="6" /><rect x="11" y="11" width="6" height="6" /><path d="M11 4V1h2M15 1h2v6h-6V6" /></svg>,
    <svg width="18" height="16" viewBox="0 0 18 16"><rect x="1" y="1" width="16" height="14" fill="none" stroke={c} strokeWidth="1.8" /><path d="M3 13l4-5 3 3 2-2 3 4z" fill="#888888" /><circle cx="5" cy="5" r="1.2" fill="#888888" /></svg>,
    <svg width="18" height="17" viewBox="0 0 18 17" fill="none" stroke={c} strokeWidth="1.8"><path d="M9 1l8 5-8 5-8-5z" /><path d="M2 10l7 5 7-5" /></svg>,
    <svg width="16" height="18" viewBox="0 0 16 18" fill="none" stroke={c} strokeWidth="1.8"><path d="M1 1h10l4 4v12H1z" /><path d="M4 8h1M7 8h5M4 12h1M7 12h5" /></svg>,
    <svg width="18" height="17" viewBox="0 0 18 17" fill="none" stroke={c} strokeWidth="1.8"><path d="M1 0v16h17" /><path d="M4 12l5-7 6 5" /><circle cx="4" cy="12" r="1" /><circle cx="9" cy="5" r="1" /><circle cx="15" cy="10" r="1" /></svg>,
    <svg width="17" height="17" viewBox="0 0 17 17" fill={c}><path d="M1 0h15a1 1 0 0 1 1 1v15a1 1 0 0 1-1 1H1a1 1 0 0 1-1-1V1a1 1 0 0 1 1-1zm1 2v3h13V2zm0 5v2h3V7zm5 0v2h3V7zm5 0v2h3V7zM2 11v4h3v-4zm5 0v4h3v-4zm5 0v4h3v-4z" fillRule="evenodd" /></svg>,
    <svg width="17" height="17" viewBox="0 0 17 17" fill="none" stroke={c} strokeWidth="2"><path d="M1 1h5v4h3V1h3v4h4v11H1z" /><path d="M5 9h3v3H5zM12 9v3" /></svg>,
    <svg width="18" height="16" viewBox="0 0 18 16" fill={c}><rect x="0" y="0" width="18" height="2.500" /><path d="M2 3v5h6" fill="none" stroke={c} strokeWidth="1.500" /><rect x="8" y="6" width="9" height="3" /><path d="M14 9v3" stroke={c} strokeWidth="1.500" /><rect x="8" y="12" width="9" height="3" /></svg>,
    <svg width="18" height="16" viewBox="0 0 18 16" fill={c}><circle cx="2.500" cy="2.500" r="2.300" /><circle cx="15.500" cy="2.500" r="2.300" /><circle cx="2.500" cy="13.500" r="2.300" /><circle cx="15.500" cy="13.500" r="2.300" /><path d="M3 2.500c4 0 5 2 6 5.500 1-3.500 2-5.500 6-5.500M3 13.500c4 0 5-2 6-5.500 1 3.500 2 5.500 6 5.500M9 3v10" fill="none" stroke={c} strokeWidth="1.200" /></svg>,
  ];
  return (
    <div className="flex w-[34px] shrink-0 flex-col border-l border-t-2 border-[#dddddd] border-l-[#cccccc] bg-[#f5f5f5]">
      <div className="flex h-[32px] shrink-0 items-center justify-center"><ChevronsLeft size={22} color="#888888" strokeWidth={1.1} /></div>
      <div className="flex h-[34px] shrink-0 items-center justify-center bg-[#0a7bff]">
        <svg width="20" height="20" viewBox="0 0 20 20">
          <path d="M9 2l7.500 7.500L10 16.500 2.500 9.500z" fill="none" stroke="#fff" strokeWidth="2" />
          <path d="M3 10h13l-6 6.500z" fill="#fff" />
          <circle cx="18" cy="15" r="1.300" fill="#cfe4ff" />
        </svg>
      </div>
      <div className="flex flex-col pt-[5px]">
        {icons.map((ic, i) => (
          <div key={i} className="flex h-[44px] items-center justify-center">{ic}</div>
        ))}
      </div>
    </div>
  );
}

function BottomBar() {
  return (
    <div className="flex h-[33px] shrink-0 items-center border-t border-[#dddddd] bg-[#f5f5f5] text-[12.5px] text-[#222222]">
      <svg width="22" height="14" viewBox="0 0 22 14" fill="none" stroke="#555555" className="ml-[21px]">
        <rect x="5" y="1" width="12" height="12" strokeWidth="2" /><path d="M1 1v12M21 1v12" />
      </svg>
      <div className="ml-[25px] w-[84px] overflow-hidden whitespace-nowrap">Brand strategy</div>
      <Caret color="#888888" className="ml-[9px]" />
      <div className="ml-[5px] h-[24px] w-px bg-[#cccccc]" />
      <div className="ml-[4px] w-[68px] whitespace-nowrap font-bold">Brand str...</div>
      <Plus size={15} color="#444444" strokeWidth={2} className="ml-[12px]" />
      <div className="ml-auto flex items-center pr-[31px]">
        <div className="flex h-[18px] w-[18px] items-center justify-center rounded-full border-2 border-[#444444]">
          <svg width="8" height="9" viewBox="0 0 8 9"><path d="M0 0l8 4.500L0 9z" fill="#777777" /></svg>
        </div>
        <Minus size={13} color="#444444" strokeWidth={2.2} className="ml-[9px]" />
        <div className="ml-[5px] flex h-[4px] w-[82px] items-center rounded-full bg-[#dddddd]">
          <div className="h-full w-[10px] rounded-l-full bg-[#cccccc]" />
          <div className="h-[11px] w-[11px] rounded-full border-2 border-[#c8c8c8] bg-white" />
        </div>
        <Plus size={14} color="#444444" strokeWidth={2.2} className="ml-[5px]" />
        <span className="ml-[14px] w-[28px] text-[13px]">61%</span>
        <Caret color="#aaaaaa" className="ml-[6px]" />
        <Maximize size={17} color="#444444" strokeWidth={2} className="ml-[18px]" />
        <svg width="16" height="16" viewBox="0 0 16 16" fill="none" stroke="#444444" className="ml-[7px]">
          <rect x="1" y="1" width="14" height="14" strokeWidth="1.8" /><path d="M4 8h8M5.500 6L3.500 8l2 2M10.500 6l2 2-2 2" />
        </svg>
      </div>
    </div>
  );
}

export default function App() {
  return (
    <div className="flex h-[744px] w-[1037px] flex-col overflow-hidden bg-[#e0e0e0] font-['Noto_Sans','Noto_Sans_CJK_SC',sans-serif]">
      <TitleBar />
      <TabBar />
      <Ribbon />
      <div className="flex h-[573px] shrink-0">
        <LeftPanel />
        <Center />
        <RightBar />
      </div>
      <BottomBar />
    </div>
  );
}
